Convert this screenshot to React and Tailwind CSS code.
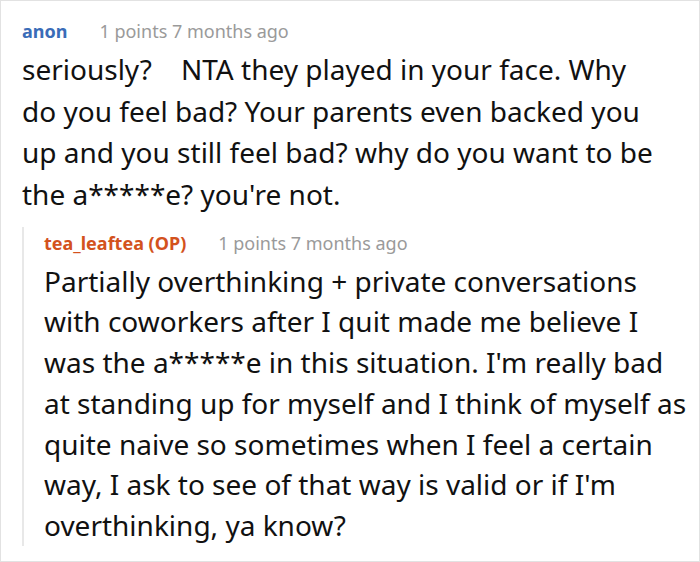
export default function App() {
  return (
    <div className="w-[700px] h-[562px] border border-[#e2e2e2] bg-white overflow-hidden" style={{ fontFamily: '"Noto Sans", sans-serif' }}>
      <div className="pl-[21px] pr-[10px] pt-[14px]">
        <div className="flex items-baseline text-[18px] leading-[32px]">
          <span className="font-bold text-[#3a6cb8]">anon</span>
          <span className="ml-[32px] text-[#9a9a9a]">1 points 7 months ago</span>
        </div>
        <p className="mt-[2px] mr-[35px] text-[28px] leading-[41.5px] text-[#111] whitespace-pre-wrap">seriously?    NTA they played in your face. Why do you feel bad? Your parents even backed you up and you still feel bad? why do you want to be the a*****e? you're not.</p>
        <div className="mt-[27px] border-l-2 border-[#e8e8e8] pl-[20px]">
          <div className="-mt-[15px] flex items-baseline text-[18px] leading-[32px]">
            <span className="font-bold text-[#d3521d]">tea_leaftea (OP)</span>
            <span className="ml-[32px] text-[#9a9a9a]">1 points 7 months ago</span>
          </div>
          <p className="mt-[1.5px] text-[28px] leading-[40.8px] text-[#111]">Partially overthinking + private conversations with coworkers after I quit made me believe I was the a*****e in this situation. I'm really bad at standing up for myself and I think of myself as quite naive so sometimes when I feel a certain way, I ask to see of that way is valid or if I'm overthinking, ya know?</p>
        </div>
      </div>
    </div>
  );
}
